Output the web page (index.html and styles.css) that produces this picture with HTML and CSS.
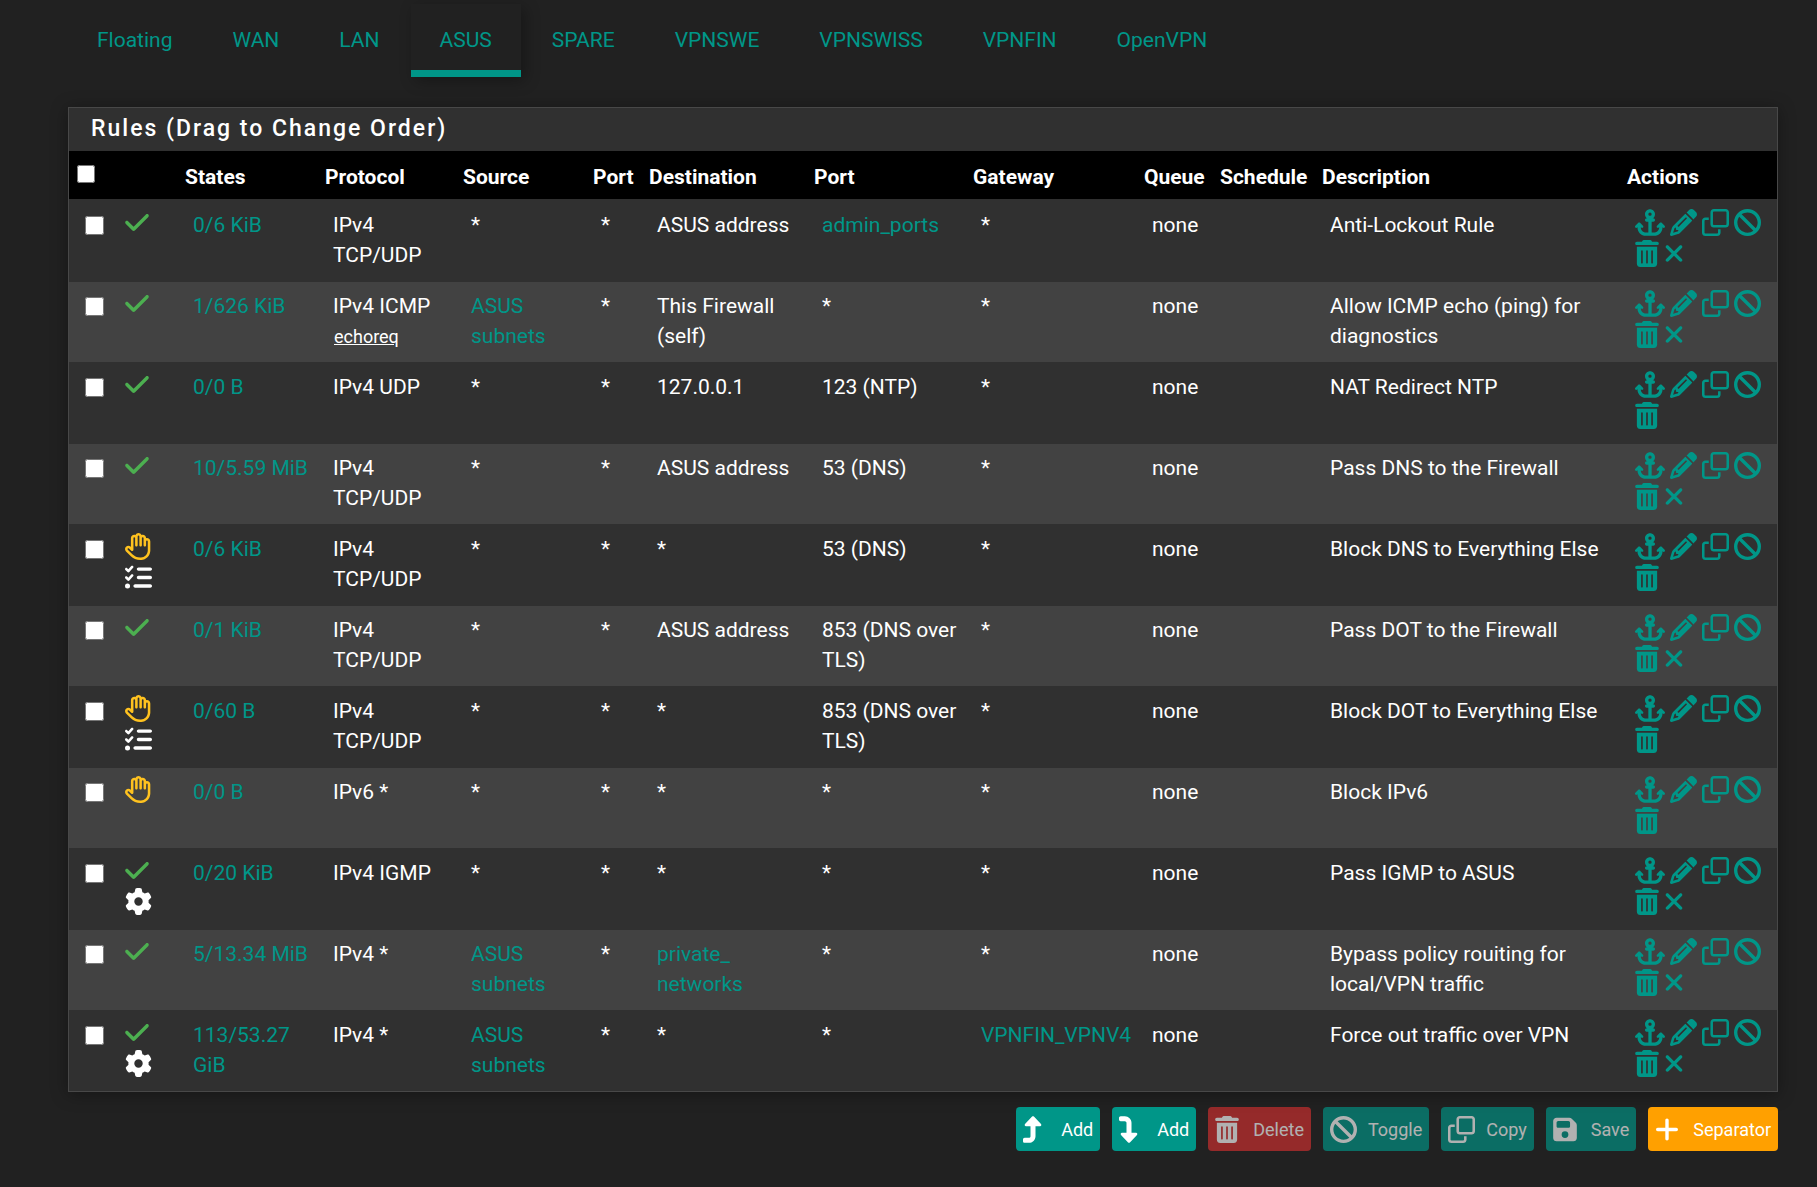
FILE: index.html
```html
<!DOCTYPE html>
<html lang="en">
<head>
  <meta charset="UTF-8">
  <meta name="viewport" content="width=device-width, initial-scale=1">
  <title>Firewall: Rules: ASUS</title>
  <link rel="stylesheet" href="styles.css">
</head>
<body>

  <!-- icons -->
  <svg class="sprite" aria-hidden="true">
    <symbol id="check" viewBox="0 0 448 512"><path d="M438.6 105.4c12.5 12.5 12.5 32.8 0 45.3l-256 256c-12.5 12.5-32.8 12.5-45.3 0l-128-128c-12.5-12.5-12.5-32.8 0-45.3s32.8-12.5 45.3 0L160 338.7 393.4 105.4c12.5-12.5 32.8-12.5 45.3 0z"/></symbol>
    <symbol id="hand" viewBox="0 0 512 512"><path d="M256 0c-25.3 0-47.2 14.7-57.6 36c-7-2.6-14.5-4-22.4-4c-35.3 0-64 28.7-64 64V261.5l-2.7-2.7c-25-25-65.5-25-90.5 0s-25 65.5 0 90.5L106.5 437c48 48 113.1 75 181 75H296h8c1.5 0 3-.1 4.5-.4c91.7-6.2 165-79.4 171.1-171.1c.3-1.5 .4-3 .4-4.5V160c0-35.3-28.7-64-64-64c-5.5 0-10.9 .7-16 2V96c0-35.3-28.7-64-64-64c-7.9 0-15.4 1.4-22.4 4C303.2 14.7 281.3 0 256 0zM240 96.1c0 0 0-.1 0-.1V64c0-8.8 7.2-16 16-16s16 7.2 16 16V95.9c0 0 0 .1 0 .1V232c0 13.3 10.7 24 24 24s24-10.7 24-24V96c0 0 0 0 0-.1c0-8.8 7.2-16 16-16s16 7.2 16 16v55.9c0 0 0 .1 0 .1v80c0 13.3 10.7 24 24 24s24-10.7 24-24V160.1c0 0 0-.1 0-.1c0-8.8 7.2-16 16-16s16 7.2 16 16V332.9c-.1 .6-.1 1.3-.2 1.9c-3.4 69.7-59.3 125.6-129 129c-.6 0-1.3 .1-1.9 .2H296h-8.5c-55.2 0-108.1-21.9-147.1-60.9L52.7 315.3c-6.2-6.2-6.2-16.4 0-22.6s16.4-6.2 22.6 0L119 336.4c6.9 6.9 17.2 8.9 26.2 5.2s14.8-12.5 14.8-22.2V96c0-8.8 7.2-16 16-16c8.8 0 16 7.1 16 15.9V232c0 13.3 10.7 24 24 24s24-10.7 24-24V96.1z"/></symbol>
    <symbol id="tasks" viewBox="0 0 512 512"><path d="M152.1 38.2c9.9 8.9 10.7 24 1.8 33.9l-72 80c-4.4 4.9-10.6 7.8-17.2 7.9s-12.9-2.4-17.6-7L7 113C-2.3 103.6-2.3 88.4 7 79s24.6-9.4 33.9 0l22.1 22.1 55.1-61.2c8.9-9.9 24-10.7 33.9-1.8zm0 160c9.9 8.9 10.7 24 1.8 33.9l-72 80c-4.4 4.9-10.6 7.8-17.2 7.9s-12.9-2.4-17.6-7L7 273c-9.4-9.4-9.4-24.6 0-33.9s24.6-9.4 33.9 0l22.1 22.1 55.1-61.2c8.9-9.9 24-10.7 33.9-1.8zM224 96c0-17.7 14.3-32 32-32H480c17.7 0 32 14.3 32 32s-14.3 32-32 32H256c-17.7 0-32-14.3-32-32zm0 160c0-17.7 14.3-32 32-32H480c17.7 0 32 14.3 32 32s-14.3 32-32 32H256c-17.7 0-32-14.3-32-32zM160 416c0-17.7 14.3-32 32-32H480c17.7 0 32 14.3 32 32s-14.3 32-32 32H192c-17.7 0-32-14.3-32-32zM48 368a48 48 0 1 1 0 96 48 48 0 1 1 0-96z"/></symbol>
    <symbol id="gear" viewBox="0 0 512 512"><path d="M495.9 166.6c3.2 8.7 .5 18.4-6.4 24.6l-43.3 39.4c1.1 8.3 1.7 16.8 1.7 25.4s-.6 17.1-1.7 25.4l43.3 39.4c6.9 6.2 9.6 15.9 6.4 24.6c-4.4 11.9-9.7 23.3-15.8 34.3l-4.7 8.1c-6.6 11-14 21.4-22.1 31.2c-5.9 7.2-15.7 9.6-24.5 6.8l-55.7-17.7c-13.4 10.3-28.2 18.9-44 25.4l-12.5 57.1c-2 9.1-9 16.3-18.2 17.8c-13.8 2.3-28 3.5-42.5 3.5s-28.7-1.2-42.5-3.5c-9.2-1.5-16.2-8.7-18.2-17.8l-12.5-57.1c-15.8-6.5-30.6-15.1-44-25.4L83.1 425.9c-8.8 2.8-18.6 .3-24.5-6.8c-8.1-9.8-15.5-20.2-22.1-31.2l-4.7-8.1c-6.1-11-11.4-22.4-15.8-34.3c-3.2-8.7-.5-18.4 6.4-24.6l43.3-39.4C64.6 273.1 64 264.6 64 256s.6-17.1 1.7-25.4L22.4 191.2c-6.9-6.2-9.6-15.9-6.4-24.6c4.4-11.9 9.7-23.3 15.8-34.3l4.7-8.1c6.6-11 14-21.4 22.1-31.2c5.9-7.2 15.7-9.6 24.5-6.8l55.7 17.7c13.4-10.3 28.2-18.9 44-25.4l12.5-57.1c2-9.1 9-16.3 18.2-17.8C227.3 1.2 241.5 0 256 0s28.7 1.2 42.5 3.5c9.2 1.5 16.2 8.7 18.2 17.8l12.5 57.1c15.8 6.5 30.6 15.1 44 25.4l55.7-17.7c8.8-2.8 18.6-.3 24.5 6.8c8.1 9.8 15.5 20.2 22.1 31.2l4.7 8.1c6.1 11 11.4 22.4 15.8 34.3zM256 336a80 80 0 1 0 0-160 80 80 0 1 0 0 160z"/></symbol>
    <symbol id="anchor" viewBox="0 0 576 512"><path d="M320 96a32 32 0 1 1 -64 0 32 32 0 1 1 64 0zm21.1 80C367 158.8 384 129.4 384 96c0-53-43-96-96-96s-96 43-96 96c0 33.4 17 62.8 42.9 80H224c-17.7 0-32 14.3-32 32s14.3 32 32 32h32V448H208c-53 0-96-43-96-96v-6.1l7 7c9.4 9.4 24.6 9.4 33.9 0s9.4-24.6 0-33.9L97 263c-9.4-9.4-24.6-9.4-33.9 0L7 319c-9.4 9.4-9.4 24.6 0 33.9s24.6 9.4 33.9 0l7-7V352c0 88.4 71.6 160 160 160h80 80c88.4 0 160-71.6 160-160v-6.1l7 7c9.4 9.4 24.6 9.4 33.9 0s9.4-24.6 0-33.9l-56-56c-9.4-9.4-24.6-9.4-33.9 0l-56 56c-9.4 9.4-9.4 24.6 0 33.9s24.6 9.4 33.9 0l7-7V352c0 53-43 96-96 96H320V240h32c17.7 0 32-14.3 32-32s-14.3-32-32-32H341.1z"/></symbol>
    <symbol id="pencil" viewBox="0 0 512 512"><path d="M410.3 231l11.3-11.3-33.9-33.9-62.1-62.1L291.7 89.8l-11.3 11.3-22.6 22.6L58.6 322.9c-10.4 10.4-18 23.3-22.2 37.4L1 480.7c-2.5 8.4-.2 17.5 6.1 23.7s15.3 8.5 23.7 6.1l120.3-35.4c14.1-4.2 27-11.8 37.4-22.2L387.7 253.7 410.3 231zM160 399.4l-9.1 22.7c-4 3.1-8.5 5.4-13.3 6.9L59.4 452l23-78.1c1.4-4.9 3.8-9.4 6.9-13.3l22.7-9.1v32c0 8.8 7.2 16 16 16h32zM362.7 18.7L348.3 33.2 325.7 55.8 314.3 67.1l33.9 33.9 62.1 62.1 33.9 33.9 11.3-11.3 22.6-22.6 14.5-14.5c25-25 25-65.5 0-90.5L453.3 18.7c-25-25-65.5-25-90.5 0zm-47.4 168l-144 144c-6.2 6.2-16.4 6.2-22.6 0s-6.2-16.4 0-22.6l144-144c6.2-6.2 16.4-6.2 22.6 0s6.2 16.4 0 22.6z"/></symbol>
    <symbol id="clone" viewBox="0 0 512 512"><path d="M64 464H288c8.8 0 16-7.2 16-16V384h48v64c0 35.3-28.7 64-64 64H64c-35.3 0-64-28.7-64-64V224c0-35.3 28.7-64 64-64h64v48H64c-8.8 0-16 7.2-16 16V448c0 8.8 7.2 16 16 16zM224 304H448c8.8 0 16-7.2 16-16V64c0-8.8-7.2-16-16-16H224c-8.8 0-16 7.2-16 16V288c0 8.8 7.2 16 16 16zm-64-16V64c0-35.3 28.7-64 64-64H448c35.3 0 64 28.7 64 64V288c0 35.3-28.7 64-64 64H224c-35.3 0-64-28.7-64-64z"/></symbol>
    <symbol id="ban" viewBox="0 0 512 512"><path d="M367.2 412.5L99.5 144.8C77.1 176.1 64 214.5 64 256c0 106 86 192 192 192c41.5 0 79.9-13.1 111.2-35.5zm45.3-45.3C434.9 335.9 448 297.5 448 256c0-106-86-192-192-192c-41.5 0-79.9 13.1-111.2 35.5L412.5 367.2zM0 256a256 256 0 1 1 512 0A256 256 0 1 1 0 256z"/></symbol>
    <symbol id="trash" viewBox="0 0 448 512"><path d="M135.2 17.7L128 32H32C14.3 32 0 46.3 0 64S14.3 96 32 96H416c17.7 0 32-14.3 32-32s-14.3-32-32-32H320l-7.2-14.3C307.4 6.8 296.3 0 284.2 0H163.8c-12.1 0-23.2 6.8-28.6 17.7zM416 128H32V448c0 35.3 28.7 64 64 64H352c35.3 0 64-28.7 64-64V128zM144 208V432c0 8.8-7.2 16-16 16s-16-7.2-16-16V208c0-8.8 7.2-16 16-16s16 7.2 16 16zm96 0V432c0 8.8-7.2 16-16 16s-16-7.2-16-16V208c0-8.8 7.2-16 16-16s16 7.2 16 16zm96 0V432c0 8.8-7.2 16-16 16s-16-7.2-16-16V208c0-8.8 7.2-16 16-16s16 7.2 16 16z"/></symbol>
    <symbol id="xmark" viewBox="0 0 384 512"><path d="M342.6 150.6c12.5-12.5 12.5-32.8 0-45.3s-32.8-12.5-45.3 0L192 210.7 86.6 105.4c-12.5-12.5-32.8-12.5-45.3 0s-12.5 32.8 0 45.3L146.7 256 41.4 361.4c-12.5 12.5-12.5 32.8 0 45.3s32.8 12.5 45.3 0L192 301.3 297.4 406.6c12.5 12.5 32.8 12.5 45.3 0s12.5-32.8 0-45.3L237.3 256 342.6 150.6z"/></symbol>
    <symbol id="turn-up" viewBox="0 0 384 512"><path d="M350 177.5c3.8-8.8 2-19-4.6-26l-136-144C204.9 2.7 198.6 0 192 0s-12.9 2.7-17.4 7.5l-136 144c-6.6 7-8.4 17.2-4.6 26s12.5 14.5 22 14.5h88l0 192c0 17.7-14.3 32-32 32H32c-17.7 0-32 14.3-32 32v32c0 17.7 14.3 32 32 32l80 0c70.7 0 128-57.3 128-128l0-192h88c9.6 0 18.2-5.7 22-14.5z"/></symbol>
    <symbol id="turn-down" viewBox="0 0 384 512"><path d="M350 334.5c3.8 8.8 2 19-4.6 26l-136 144c-4.5 4.8-10.8 7.5-17.4 7.5s-12.9-2.7-17.4-7.5l-136-144c-6.6-7-8.4-17.2-4.6-26s12.5-14.5 22-14.5h88l0-192c0-17.7-14.3-32-32-32H32C14.3 96 0 81.7 0 64V32C0 14.3 14.3 0 32 0l80 0c70.7 0 128 57.3 128 128l0 192h88c9.6 0 18.2 5.7 22 14.5z"/></symbol>
    <symbol id="save" viewBox="0 0 448 512"><path d="M64 32C28.7 32 0 60.7 0 96V416c0 35.3 28.7 64 64 64H384c35.3 0 64-28.7 64-64V173.3c0-17-6.7-33.3-18.7-45.3L352 50.7C340 38.7 323.7 32 306.7 32H64zm0 96c0-17.7 14.3-32 32-32H288c17.7 0 32 14.3 32 32v64c0 17.7-14.3 32-32 32H96c-17.7 0-32-14.3-32-32V128zM224 288a64 64 0 1 1 0 128 64 64 0 1 1 0-128z"/></symbol>
    <symbol id="plus" viewBox="0 0 448 512"><path d="M256 80c0-17.7-14.3-32-32-32s-32 14.3-32 32V224H48c-17.7 0-32 14.3-32 32s14.3 32 32 32H192V432c0 17.7 14.3 32 32 32s32-14.3 32-32V288H400c17.7 0 32-14.3 32-32s-14.3-32-32-32H256V80z"/></symbol>
  </svg>

  <nav class="tabs">
    <a href="#">Floating</a>
    <a href="#">WAN</a>
    <a href="#">LAN</a>
    <a href="#" class="active">ASUS</a>
    <a href="#">SPARE</a>
    <a href="#">VPNSWE</a>
    <a href="#">VPNSWISS</a>
    <a href="#">VPNFIN</a>
    <a href="#">OpenVPN</a>
  </nav>

  <form>
    <div class="panel">
      <h2>Rules (Drag to Change Order)</h2>
      <table>
        <colgroup>
          <col class="c-check"><col class="c-icon"><col class="c-states"><col class="c-proto"><col class="c-source"><col class="c-sport"><col class="c-dest"><col class="c-dport"><col class="c-gateway"><col class="c-queue"><col class="c-schedule"><col><col class="c-actions">
        </colgroup>
        <thead>
          <tr>
            <th><input type="checkbox" aria-label="Select all"></th>
            <th></th>
            <th>States</th>
            <th>Protocol</th>
            <th>Source</th>
            <th>Port</th>
            <th>Destination</th>
            <th>Port</th>
            <th>Gateway</th>
            <th>Queue</th>
            <th>Schedule</th>
            <th>Description</th>
            <th>Actions</th>
          </tr>
        </thead>
        <tbody>
          <tr>
            <td><input type="checkbox" aria-label="Select rule 1"></td>
            <td class="icons"><div><svg class="w24 pass"><use href="#check"/></svg></div></td>
            <td><a href="#">0/6 KiB</a></td>
            <td>IPv4 TCP/UDP</td>
            <td>*</td>
            <td>*</td>
            <td>ASUS address</td>
            <td><a href="#">admin_ports</a></td>
            <td>*</td>
            <td>none</td>
            <td></td>
            <td>Anti-Lockout Rule</td>
            <td class="icons"><div>
              <a href="#" title="Move"><svg class="w30"><use href="#anchor"/></svg></a>
              <a href="#" title="Edit"><svg><use href="#pencil"/></svg></a>
              <a href="#" title="Copy"><svg><use href="#clone"/></svg></a>
              <a href="#" title="Disable"><svg><use href="#ban"/></svg></a>
              <a href="#" title="Delete"><svg class="w24"><use href="#trash"/></svg></a>
              <a href="#" title="Kill states"><svg class="w20"><use href="#xmark"/></svg></a>
            </div></td>
          </tr>
          <tr>
            <td><input type="checkbox" aria-label="Select rule 2"></td>
            <td class="icons"><div><svg class="w24 pass"><use href="#check"/></svg></div></td>
            <td><a href="#">1/626 KiB</a></td>
            <td>IPv4 ICMP <span class="icmp">echoreq</span></td>
            <td><a href="#">ASUS subnets</a></td>
            <td>*</td>
            <td>This Firewall (self)</td>
            <td>*</td>
            <td>*</td>
            <td>none</td>
            <td></td>
            <td>Allow ICMP echo (ping) for diagnostics</td>
            <td class="icons"><div>
              <a href="#" title="Move"><svg class="w30"><use href="#anchor"/></svg></a>
              <a href="#" title="Edit"><svg><use href="#pencil"/></svg></a>
              <a href="#" title="Copy"><svg><use href="#clone"/></svg></a>
              <a href="#" title="Disable"><svg><use href="#ban"/></svg></a>
              <a href="#" title="Delete"><svg class="w24"><use href="#trash"/></svg></a>
              <a href="#" title="Kill states"><svg class="w20"><use href="#xmark"/></svg></a>
            </div></td>
          </tr>
          <tr>
            <td><input type="checkbox" aria-label="Select rule 3"></td>
            <td class="icons"><div><svg class="w24 pass"><use href="#check"/></svg></div></td>
            <td><a href="#">0/0 B</a></td>
            <td>IPv4 UDP</td>
            <td>*</td>
            <td>*</td>
            <td>127.0.0.1</td>
            <td>123 (NTP)</td>
            <td>*</td>
            <td>none</td>
            <td></td>
            <td>NAT Redirect NTP</td>
            <td class="icons"><div>
              <a href="#" title="Move"><svg class="w30"><use href="#anchor"/></svg></a>
              <a href="#" title="Edit"><svg><use href="#pencil"/></svg></a>
              <a href="#" title="Copy"><svg><use href="#clone"/></svg></a>
              <a href="#" title="Disable"><svg><use href="#ban"/></svg></a>
              <a href="#" title="Delete"><svg class="w24"><use href="#trash"/></svg></a>
            </div></td>
          </tr>
          <tr>
            <td><input type="checkbox" aria-label="Select rule 4"></td>
            <td class="icons"><div><svg class="w24 pass"><use href="#check"/></svg></div></td>
            <td><a href="#">10/5.59 MiB</a></td>
            <td>IPv4 TCP/UDP</td>
            <td>*</td>
            <td>*</td>
            <td>ASUS address</td>
            <td>53 (DNS)</td>
            <td>*</td>
            <td>none</td>
            <td></td>
            <td>Pass DNS to the Firewall</td>
            <td class="icons"><div>
              <a href="#" title="Move"><svg class="w30"><use href="#anchor"/></svg></a>
              <a href="#" title="Edit"><svg><use href="#pencil"/></svg></a>
              <a href="#" title="Copy"><svg><use href="#clone"/></svg></a>
              <a href="#" title="Disable"><svg><use href="#ban"/></svg></a>
              <a href="#" title="Delete"><svg class="w24"><use href="#trash"/></svg></a>
              <a href="#" title="Kill states"><svg class="w20"><use href="#xmark"/></svg></a>
            </div></td>
          </tr>
          <tr>
            <td><input type="checkbox" aria-label="Select rule 5"></td>
            <td class="icons"><div><svg class="block"><use href="#hand"/></svg> <svg><use href="#tasks"/></svg></div></td>
            <td><a href="#">0/6 KiB</a></td>
            <td>IPv4 TCP/UDP</td>
            <td>*</td>
            <td>*</td>
            <td>*</td>
            <td>53 (DNS)</td>
            <td>*</td>
            <td>none</td>
            <td></td>
            <td>Block DNS to Everything Else</td>
            <td class="icons"><div>
              <a href="#" title="Move"><svg class="w30"><use href="#anchor"/></svg></a>
              <a href="#" title="Edit"><svg><use href="#pencil"/></svg></a>
              <a href="#" title="Copy"><svg><use href="#clone"/></svg></a>
              <a href="#" title="Disable"><svg><use href="#ban"/></svg></a>
              <a href="#" title="Delete"><svg class="w24"><use href="#trash"/></svg></a>
            </div></td>
          </tr>
          <tr>
            <td><input type="checkbox" aria-label="Select rule 6"></td>
            <td class="icons"><div><svg class="w24 pass"><use href="#check"/></svg></div></td>
            <td><a href="#">0/1 KiB</a></td>
            <td>IPv4 TCP/UDP</td>
            <td>*</td>
            <td>*</td>
            <td>ASUS address</td>
            <td>853 (DNS over TLS)</td>
            <td>*</td>
            <td>none</td>
            <td></td>
            <td>Pass DOT to the Firewall</td>
            <td class="icons"><div>
              <a href="#" title="Move"><svg class="w30"><use href="#anchor"/></svg></a>
              <a href="#" title="Edit"><svg><use href="#pencil"/></svg></a>
              <a href="#" title="Copy"><svg><use href="#clone"/></svg></a>
              <a href="#" title="Disable"><svg><use href="#ban"/></svg></a>
              <a href="#" title="Delete"><svg class="w24"><use href="#trash"/></svg></a>
              <a href="#" title="Kill states"><svg class="w20"><use href="#xmark"/></svg></a>
            </div></td>
          </tr>
          <tr>
            <td><input type="checkbox" aria-label="Select rule 7"></td>
            <td class="icons"><div><svg class="block"><use href="#hand"/></svg> <svg><use href="#tasks"/></svg></div></td>
            <td><a href="#">0/60 B</a></td>
            <td>IPv4 TCP/UDP</td>
            <td>*</td>
            <td>*</td>
            <td>*</td>
            <td>853 (DNS over TLS)</td>
            <td>*</td>
            <td>none</td>
            <td></td>
            <td>Block DOT to Everything Else</td>
            <td class="icons"><div>
              <a href="#" title="Move"><svg class="w30"><use href="#anchor"/></svg></a>
              <a href="#" title="Edit"><svg><use href="#pencil"/></svg></a>
              <a href="#" title="Copy"><svg><use href="#clone"/></svg></a>
              <a href="#" title="Disable"><svg><use href="#ban"/></svg></a>
              <a href="#" title="Delete"><svg class="w24"><use href="#trash"/></svg></a>
            </div></td>
          </tr>
          <tr>
            <td><input type="checkbox" aria-label="Select rule 8"></td>
            <td class="icons"><div><svg class="block"><use href="#hand"/></svg></div></td>
            <td><a href="#">0/0 B</a></td>
            <td>IPv6 *</td>
            <td>*</td>
            <td>*</td>
            <td>*</td>
            <td>*</td>
            <td>*</td>
            <td>none</td>
            <td></td>
            <td>Block IPv6</td>
            <td class="icons"><div>
              <a href="#" title="Move"><svg class="w30"><use href="#anchor"/></svg></a>
              <a href="#" title="Edit"><svg><use href="#pencil"/></svg></a>
              <a href="#" title="Copy"><svg><use href="#clone"/></svg></a>
              <a href="#" title="Disable"><svg><use href="#ban"/></svg></a>
              <a href="#" title="Delete"><svg class="w24"><use href="#trash"/></svg></a>
            </div></td>
          </tr>
          <tr>
            <td><input type="checkbox" aria-label="Select rule 9"></td>
            <td class="icons"><div><svg class="w24 pass"><use href="#check"/></svg> <svg><use href="#gear"/></svg></div></td>
            <td><a href="#">0/20 KiB</a></td>
            <td>IPv4 IGMP</td>
            <td>*</td>
            <td>*</td>
            <td>*</td>
            <td>*</td>
            <td>*</td>
            <td>none</td>
            <td></td>
            <td>Pass IGMP to ASUS</td>
            <td class="icons"><div>
              <a href="#" title="Move"><svg class="w30"><use href="#anchor"/></svg></a>
              <a href="#" title="Edit"><svg><use href="#pencil"/></svg></a>
              <a href="#" title="Copy"><svg><use href="#clone"/></svg></a>
              <a href="#" title="Disable"><svg><use href="#ban"/></svg></a>
              <a href="#" title="Delete"><svg class="w24"><use href="#trash"/></svg></a>
              <a href="#" title="Kill states"><svg class="w20"><use href="#xmark"/></svg></a>
            </div></td>
          </tr>
          <tr>
            <td><input type="checkbox" aria-label="Select rule 10"></td>
            <td class="icons"><div><svg class="w24 pass"><use href="#check"/></svg></div></td>
            <td><a href="#">5/13.34 MiB</a></td>
            <td>IPv4 *</td>
            <td><a href="#">ASUS subnets</a></td>
            <td>*</td>
            <td><a href="#">private_<wbr>networks</a></td>
            <td>*</td>
            <td>*</td>
            <td>none</td>
            <td></td>
            <td>Bypass policy rouiting for local/VPN traffic</td>
            <td class="icons"><div>
              <a href="#" title="Move"><svg class="w30"><use href="#anchor"/></svg></a>
              <a href="#" title="Edit"><svg><use href="#pencil"/></svg></a>
              <a href="#" title="Copy"><svg><use href="#clone"/></svg></a>
              <a href="#" title="Disable"><svg><use href="#ban"/></svg></a>
              <a href="#" title="Delete"><svg class="w24"><use href="#trash"/></svg></a>
              <a href="#" title="Kill states"><svg class="w20"><use href="#xmark"/></svg></a>
            </div></td>
          </tr>
          <tr>
            <td><input type="checkbox" aria-label="Select rule 11"></td>
            <td class="icons"><div><svg class="w24 pass"><use href="#check"/></svg> <svg><use href="#gear"/></svg></div></td>
            <td><a href="#">113/53.27 GiB</a></td>
            <td>IPv4 *</td>
            <td><a href="#">ASUS subnets</a></td>
            <td>*</td>
            <td>*</td>
            <td>*</td>
            <td><a href="#">VPNFIN_VPNV4</a></td>
            <td>none</td>
            <td></td>
            <td>Force out traffic over VPN</td>
            <td class="icons"><div>
              <a href="#" title="Move"><svg class="w30"><use href="#anchor"/></svg></a>
              <a href="#" title="Edit"><svg><use href="#pencil"/></svg></a>
              <a href="#" title="Copy"><svg><use href="#clone"/></svg></a>
              <a href="#" title="Disable"><svg><use href="#ban"/></svg></a>
              <a href="#" title="Delete"><svg class="w24"><use href="#trash"/></svg></a>
              <a href="#" title="Kill states"><svg class="w20"><use href="#xmark"/></svg></a>
            </div></td>
          </tr>
        </tbody>
      </table>
    </div>

    <div class="buttons">
      <button type="button"><span class="ico"><svg class="w20"><use href="#turn-up"/></svg></span>Add</button>
      <button type="button"><span class="ico"><svg class="w20"><use href="#turn-down"/></svg></span>Add</button>
      <button type="button" class="danger" disabled><span class="ico"><svg class="w24"><use href="#trash"/></svg></span>Delete</button>
      <button type="button" disabled><span class="ico"><svg><use href="#ban"/></svg></span>Toggle</button>
      <button type="button" disabled><span class="ico"><svg><use href="#clone"/></svg></span>Copy</button>
      <button type="button" disabled><span class="ico"><svg class="w24"><use href="#save"/></svg></span>Save</button>
      <button type="button" class="warning"><span class="ico"><svg class="w24"><use href="#plus"/></svg></span>Separator</button>
    </div>
  </form>

</body>
</html>
```
FILE: styles.css
```css
body {
  margin: 0;
  padding: 4px 39px 32px 68px;
  background-color: #212121;
  color: #fff;
  font-family: Roboto, sans-serif;
  font-size: 21px;
  line-height: 30px;
}
a {
  color: #009688;
  text-decoration: none;
}
svg {
  display: block;
  width: 27px;
  height: 27px;
  fill: currentColor;
}
.sprite {
  display: none;
}
.w20 {
  width: 20px;
}
.w24 {
  width: 24px;
}
.w30 {
  width: 30px;
}

/* tabs */
.tabs {
  display: flex;
  gap: 2px;
  margin-bottom: 30px;
}
.tabs a {
  padding: 21px 29px 15px;
  border-bottom: 7px solid transparent;
}
.tabs a.active {
  border-bottom-color: #009688;
  box-shadow: 4px 4px 14px rgba(0, 0, 0, 0.3);
}

/* rules */
.panel {
  border: 1px solid #484848;
  background-color: #303030;
  box-shadow: 0 2px 16px rgba(0, 0, 0, 0.35);
}
h2 {
  margin: 0;
  padding: 6px 22px 7px;
  font-size: 23px;
  font-weight: 500;
  line-height: 30px;
  letter-spacing: 2px;
}
table {
  width: 100%;
  table-layout: fixed;
  border-collapse: separate;
  border-spacing: 0;
}
.c-check { width: 40px; }
.c-icon { width: 68px; }
.c-states { width: 140px; }
.c-proto { width: 138px; }
.c-source { width: 130px; }
.c-sport { width: 56px; }
.c-dest { width: 165px; }
.c-dport { width: 159px; }
.c-gateway { width: 171px; }
.c-queue { width: 76px; }
.c-schedule { width: 102px; }
.c-actions { width: 158px; }
th {
  padding: 11px 0 7px 8px;
  background-color: #000;
  border-bottom: 1px solid #303030;
  text-align: left;
  font-weight: 700;
  white-space: nowrap;
}
td {
  height: 61px;
  padding: 9px 4px 10px 16px;
  border-top: 1px solid #303030;
  vertical-align: top;
}
tbody tr:nth-child(even) td {
  background-color: #424242;
}
input[type="checkbox"] {
  display: block;
  width: 19px;
  height: 19px;
  margin: 6px 0 0;
}
th input[type="checkbox"] {
  width: 18px;
  height: 18px;
  margin: 0 0 7px;
}
td.icons {
  height: 62px;
  padding-top: 8px;
}
.icons div {
  display: flex;
  flex-wrap: wrap;
  gap: 4px 5px;
}
td.icons:nth-child(2) div {
  flex-direction: column;
}
.pass {
  color: #4caf50;
}
.block {
  color: #ffc21f;
}
.icmp {
  padding-left: 1px;
  font-size: 18px;
  text-decoration: underline;
}

/* buttons */
.buttons {
  display: flex;
  justify-content: flex-end;
  gap: 12px;
  margin-top: 15px;
}
button {
  display: flex;
  align-items: center;
  height: 44px;
  padding: 0 7px;
  border: none;
  border-radius: 4px;
  background-color: #009688;
  color: #fff;
  font: 400 18px Roboto, sans-serif;
}
button:disabled {
  opacity: 0.65;
}
.ico {
  width: 38px;
}
.danger {
  background-color: #d32f2f;
}
.warning {
  background-color: #ffa000;
}
```
